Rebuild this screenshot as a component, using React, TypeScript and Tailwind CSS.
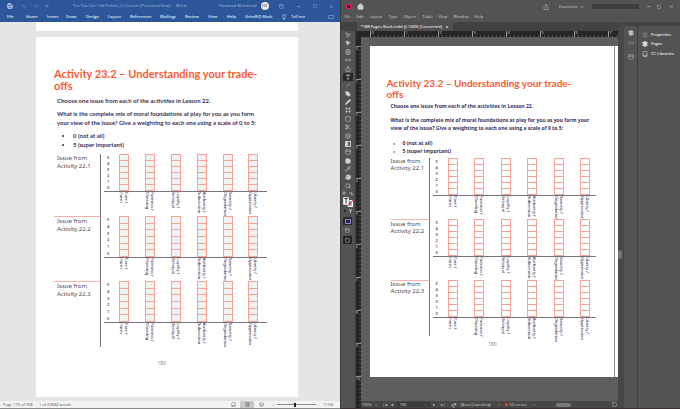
import clsx from "clsx";
import {
  Book,
  ChevronDown,
  Droplet,
  FileText,
  Frame,
  Hand,
  Home,
  Layers,
  Lightbulb,
  Link2,
  Minus,
  MousePointer2,
  MoveHorizontal,
  PanelTop,
  Pencil,
  PenTool,
  Pipette,
  Redo2,
  Save,
  Scissors,
  Search,
  Share,
  SlidersHorizontal,
  Square,
  StickyNote,
  Type,
  Undo2,
  X,
} from "lucide-react";

const wordTabs = [
  { name: "File", width: "w-[19px]" },
  { name: "Home", width: "w-[21px]" },
  { name: "Insert", width: "w-[19px]" },
  { name: "Draw", width: "w-5" },
  { name: "Design", width: "w-[22px]" },
  { name: "Layout", width: "w-[22px]" },
  { name: "References", width: "w-[30px]" },
  { name: "Mailings", width: "w-[25px]" },
  { name: "Review", width: "w-[23px]" },
  { name: "View", width: "w-[19px]" },
  { name: "Help", width: "w-[18px]" },
  { name: "GrindEQ Math", width: "w-[36px]" },
];

const layoutMenus = [
  { name: "File", width: "w-3" },
  { name: "Edit", width: "w-[13px]" },
  { name: "Layout", width: "w-[19px]" },
  { name: "Type", width: "w-[15px]" },
  { name: "Object", width: "w-[19px]" },
  { name: "Table", width: "w-4" },
  { name: "View", width: "w-[15px]" },
  { name: "Window", width: "w-[21px]" },
  { name: "Help", width: "w-3" },
];

const tools = [
  { name: "Selection", icon: MousePointer2 },
  { name: "Direct selection", icon: MousePointer2, solid: true },
  { name: "Page", icon: FileText },
  { name: "Gap", icon: MoveHorizontal },
  { name: "Content collector", icon: Share },
  { name: "Type", icon: Type, active: true },
  { name: "Line", icon: Minus, rotated: true },
  { name: "Pen", icon: PenTool, solid: true },
  { name: "Pencil", icon: Pencil, solid: true },
  { name: "Rectangle frame", icon: Frame },
  { name: "Rectangle", icon: Square },
  { name: "Scissors", icon: Scissors },
  { name: "Free transform", icon: Layers },
  { name: "Gradient swatch", icon: Droplet, gradient: true },
  { name: "Gradient feather", icon: PanelTop },
  { name: "Note", icon: StickyNote, solid: true },
  { name: "Eyedropper", icon: Pipette },
  { name: "Hand", icon: Hand, solid: true },
  { name: "Zoom", icon: Search },
];

const foundations = [
  ["Care /", "Harm"],
  ["Fairness /", "Cheating"],
  ["Loyalty /", "Betrayal"],
  ["Authority /", "Subversion"],
  ["Sanctity /", "Degradation"],
  ["Liberty /", "Oppression"],
];

const scale = [5, 4, 3, 2, 1, 0];

interface ScaleChartProps {
  activity: string;
  rowClass: string;
  plotClass: string;
  labelClass: string;
  plotPadding: string;
  shaded?: boolean;
  first?: boolean;
}

function ScaleChart({
  activity,
  rowClass,
  plotClass,
  labelClass,
  plotPadding,
  shaded,
  first,
}: ScaleChartProps) {
  return (
    <section className={clsx("flex", rowClass)}>
      <h2
        className={clsx(
          "shrink-0 border-r border-r-[#77727c] font-['Noto_Sans'] text-[6px] text-[#514a5e]",
          !first && "border-t border-t-[#f4b5a8]",
          labelClass
        )}
      >
        Issue from
        <br />
        Activity {activity}
      </h2>
      <div className="ml-[3px] min-w-0 flex-1">
        <div className={clsx("flex border-b border-[#77727c]", plotClass)}>
          <div className="flex w-[15px] flex-col justify-between py-px pl-[3px] font-['Noto_Sans'] text-[4px] leading-[5px] font-semibold text-[#55505c]">
            {scale.map((n) => (
              <span key={n}>{n}</span>
            ))}
          </div>
          <div className={clsx("flex flex-1 justify-between", plotPadding)}>
            {foundations.map(([name]) => (
              <div
                key={name}
                className={clsx(
                  "flex w-[10px] flex-col divide-y divide-[#f7a292] border border-[#f7a292]",
                  shaded && "bg-[#f3f2f2]"
                )}
              >
                {scale.map((n) => (
                  <div key={n} className="flex-1 border-[#f7a292]" />
                ))}
              </div>
            ))}
          </div>
        </div>
        <div className={clsx("ml-[15px] flex justify-between", plotPadding)}>
          {foundations.map(([top, bottom]) => (
            <p
              key={top}
              className="h-5 w-[10px] font-['Noto_Sans'] text-[4px] leading-[5px] font-medium whitespace-nowrap text-[#3b3058] [writing-mode:vertical-rl]"
            >
              {top}
              <br />
              {bottom}
            </p>
          ))}
        </div>
      </div>
    </section>
  );
}

function WordWindow() {
  return (
    <div className="flex min-w-0 flex-1 flex-col border-r border-[#3a3a3a] bg-[#e5e5e5]">
      <header className="bg-[#2b579a] text-[#dfe8f5]">
        <div className="flex h-3 items-center pl-[7px] text-[4px]">
          <button aria-label="Save"><Save className="size-[6px]" strokeWidth={3} /></button>
          <button aria-label="Undo" className="ml-2 text-[#6f91c4]"><Undo2 className="size-[5px]" /></button>
          <button aria-label="Redo" className="ml-2 text-[#6f91c4]"><Redo2 className="size-[5px]" /></button>
          <button aria-label="Customize toolbar" className="ml-[6px]"><ChevronDown className="size-1" strokeWidth={4} /></button>
          <h1 className="ml-6 flex-1 whitespace-nowrap text-[#a9bddc]">
            Yes You Can Talk Politics_2_Convert [Protected View] &nbsp;-&nbsp; Word
          </h1>
          <span className="whitespace-nowrap text-[#a9bddc]">Hammad Mehmood</span>
          <span className="ml-1 flex size-2 items-center justify-center rounded-full bg-[#e8e6e3] text-[3px] text-[#555555]">HM</span>
          <button aria-label="Ribbon options" className="ml-[10px] text-[#a9bddc]"><PanelTop className="size-[5px]" /></button>
          <button aria-label="Minimize" className="ml-3 text-[#a9bddc]"><Minus className="size-[5px]" /></button>
          <button aria-label="Restore" className="ml-3 text-[#a9bddc]"><Square className="size-1" /></button>
          <button aria-label="Close" className="mr-[6px] ml-3 text-[#a9bddc]"><X className="size-[5px]" /></button>
        </div>
        <nav className="flex h-[10px] items-center pl-[7px] text-[4px] font-semibold">
          {wordTabs.map((tab) => (
            <button key={tab.name} className={clsx("shrink-0 text-left whitespace-nowrap", tab.width)}>
              {tab.name}
            </button>
          ))}
          <button className="flex flex-1 items-center gap-1 whitespace-nowrap">
            <Lightbulb className="size-[6px]" />
            Tell me
          </button>
          <button aria-label="Comments" className="mr-[6px] h-1 w-[6px] border border-[#5f84bb]" />
        </nav>
      </header>

      <main className="flex min-h-0 flex-1 flex-col gap-[6px] overflow-hidden">
        <div className="mr-[42px] ml-9 h-[9px] shrink-0 bg-white" />
        <article className="mr-[42px] ml-9 flex h-[360px] shrink-0 flex-col bg-white pt-[31px] pl-[18px] text-[#3b3058]">
          <h2 className="font-['Lato'] text-[11px] leading-3 font-bold whitespace-nowrap text-[#fa5a32]">
            Activity 23.2 – Understanding your trade-
            <br />
            offs
          </h2>
          <div className="pt-1 pl-[3px] font-['Lato'] text-[6px] leading-[9px] font-bold whitespace-nowrap">
            <p>Choose one issue from each of the activities in Lesson 22.</p>
            <p className="mt-1">
              What is the complete mix of moral foundations at play for you as you form
              <br />
              your view of the issue? Give a weighting to each one using a scale of 0 to 5:
            </p>
            <ul className="mt-1 list-disc pl-4">
              <li>0 (not at all)</li>
              <li>5 (super important)</li>
            </ul>
          </div>
          <div className="mt-[5px] pr-[31px]">
            <ScaleChart
              activity="22.1"
              first
              shaded
              rowClass="h-[62px]"
              plotClass="h-[38px]"
              labelClass="w-[47px] pl-[3px] leading-2"
              plotPadding="pr-2"
            />
            <ScaleChart
              activity="22.2"
              shaded
              rowClass="h-[65px]"
              plotClass="h-[42px]"
              labelClass="w-[47px] pl-[3px] leading-2"
              plotPadding="pr-2"
            />
            <ScaleChart
              activity="22.3"
              shaded
              rowClass="h-[66px]"
              plotClass="h-[42px]"
              labelClass="w-[47px] pl-[3px] leading-2"
              plotPadding="pr-2"
            />
          </div>
          <footer className="mt-[13px] pr-7 text-center text-[5px] leading-[6px] text-[#77727c]">180</footer>
        </article>
      </main>

      <footer className="flex h-2 shrink-0 items-center border-b border-[#8a8a8a] bg-[#f3f3f3] pr-[6px] pl-[3px] text-[4px] text-[#555555]">
        <span className="w-9 whitespace-nowrap">Page 175 of 298</span>
        <span className="flex-1 whitespace-nowrap">1 of 49684 words</span>
        <button aria-label="Read mode" className="flex w-[14px] justify-center"><Book className="size-[5px]" /></button>
        <button aria-label="Print layout" className="flex h-full w-[14px] items-center justify-center bg-[#c8c8c8]"><FileText className="size-[5px]" /></button>
        <button aria-label="Web layout" className="flex w-[14px] justify-center"><Layers className="size-[5px]" /></button>
        <button aria-label="Zoom out" className="ml-1"><Minus className="size-1" /></button>
        <input
          type="range"
          aria-label="Zoom"
          defaultValue={47}
          className="mx-px h-[5px] w-[39px] appearance-none bg-[linear-gradient(#8a8a8a,#8a8a8a)] bg-[length:100%_1px] bg-center bg-no-repeat [&::-webkit-slider-thumb]:h-1 [&::-webkit-slider-thumb]:w-[2px] [&::-webkit-slider-thumb]:appearance-none [&::-webkit-slider-thumb]:bg-[#222222]"
        />
        <button aria-label="Zoom in" className="mr-1">+</button>
        <span>110%</span>
      </footer>
    </div>
  );
}

function HorizontalRuler() {
  return (
    <div className="flex h-[6px] shrink-0 overflow-hidden bg-[#262626] pl-[9px]">
      {[0, 1, 2, 3, 4, 5, 6, 7].map((n) => (
        <div
          key={n}
          className="w-[34px] shrink-0 border-l border-[#9a9a9a] bg-[repeating-linear-gradient(90deg,#262626_0px_3px,#4a4a4a_3px_4px)] bg-[length:100%_2px] bg-bottom bg-no-repeat pl-px text-[4px] leading-1 text-[#c8c8c8]"
        >
          {n}
        </div>
      ))}
    </div>
  );
}

function VerticalRuler() {
  return (
    <div className="w-[5px] shrink-0 overflow-hidden bg-[#262626] pt-[15px]">
      {[0, 1, 2, 3, 4, 5, 6, 7, 8, 9, 10].map((n) => (
        <div
          key={n}
          className="h-[33px] border-t border-[#8a8a8a] bg-[repeating-linear-gradient(#262626_0px_3px,#4a4a4a_3px_4px)] bg-[length:2px_100%] bg-right bg-no-repeat text-[4px] leading-1 text-[#c8c8c8]"
        >
          {n}
        </div>
      ))}
    </div>
  );
}

function Toolbox() {
  return (
    <aside className="flex w-[15px] shrink-0 flex-col items-center border-r border-[#404040] bg-[#535353] text-[#d4d4d4]">
      <div className="flex h-[159px] shrink-0 flex-col justify-between">
        {tools.map((tool) => (
          <button
            key={tool.name}
            aria-label={tool.name}
            className={clsx(
              "flex h-2 w-[10px] items-center justify-center",
              tool.active && "bg-[#262626] text-white"
            )}
          >
            {tool.gradient ? (
              <span className="size-[6px] border border-[#c9c9c9] bg-linear-to-r from-white to-[#333333]" />
            ) : (
              <tool.icon
                className={clsx("size-[6px]", tool.solid && "fill-current", tool.rotated && "-rotate-45")}
                strokeWidth={2}
              />
            )}
          </button>
        ))}
      </div>
      <svg viewBox="0 0 12 26" className="mt-px h-[26px] w-3 shrink-0" aria-hidden="true">
        <path d="M1 1h2v2H1zM7 2h3v3" fill="none" stroke="#c9c9c9" strokeWidth="0.7" />
        <rect x="5" y="9" width="6" height="7" fill="#fff" />
        <rect x="6.500" y="10.500" width="3" height="4" fill="#777" />
        <path d="M5 16l6-7" stroke="#e53935" strokeWidth="1" />
        <rect x="1" y="6" width="6" height="8" fill="#fff" stroke="#444" strokeWidth="0.400" />
        <path d="M2.500 7.500h3M4 7.500v5" stroke="#222" strokeWidth="1" />
        <path d="M2 19h2v2H2z" fill="#222" />
        <path d="M7 19h3M8.500 19v3" stroke="#d0d0d0" strokeWidth="0.800" />
      </svg>
      <button aria-label="Apply color" className="flex h-2 w-[9px] shrink-0 items-center justify-center bg-[#262626]">
        <span className="h-[5px] w-[6px] border border-[#8c83b8] bg-[#30245c]" />
      </button>
      <button aria-label="View options" className="mt-[3px]"><PanelTop className="size-[5px]" /></button>
      <button aria-label="Screen mode" className="mt-[3px] flex h-2 w-[9px] items-center justify-center bg-[#262626]">
        <Square className="size-[5px]" />
      </button>
    </aside>
  );
}

function LayoutPage() {
  return (
    <article className="ml-[9px] h-[331px] shrink-0 bg-white pr-[3px] text-[#3b3058]">
      <div className="flex h-full flex-col border-r border-[#8a8a8a] pt-8 pl-[17px]">
        <h2 className="font-['Lato'] text-[10px] leading-[11px] font-bold whitespace-nowrap text-[#fa5a32]">
          Activity 23.2 – Understanding your trade-
          <br />
          offs
        </h2>
        <div className="pt-[2px] pl-1 text-[5px] leading-2 font-bold whitespace-nowrap">
          <p>Choose one issue from each of the activities in Lesson 22.</p>
          <p className="mt-[6px]">
            What is the complete mix of moral foundations at play for you as you form your
            <br />
            view of the issue? Give a weighting to each one using a scale of 0 to 5:
          </p>
          <ul className="mt-[7px] list-disc pl-3 marker:text-[#9a95a5]">
            <li>0 (not at all)</li>
            <li>5 (super important)</li>
          </ul>
        </div>
        <div className="mt-[3px] pr-[18px] pl-1">
          <ScaleChart
            activity="22.1"
            first
            rowClass="h-[61px]"
            plotClass="h-[38px]"
            labelClass="w-[39px] leading-[7px]"
            plotPadding="pr-[6px]"
          />
          <ScaleChart
            activity="22.2"
            rowClass="h-[61px]"
            plotClass="h-[38px]"
            labelClass="w-[39px] pt-px leading-[7px]"
            plotPadding="pr-[6px]"
          />
          <ScaleChart
            activity="22.3"
            rowClass="h-[56px]"
            plotClass="h-[38px]"
            labelClass="w-[39px] leading-[7px]"
            plotPadding="pr-[6px]"
          />
        </div>
        <footer className="mt-[5px] pr-4 text-center text-[5px] leading-[6px] text-[#77727c]">180</footer>
      </div>
    </article>
  );
}

function LayoutWindow() {
  return (
    <div className="flex min-w-0 flex-1 flex-col border-b border-[#3a3035] bg-[#535353] text-[4px] text-[#d0d0d0]">
      <header>
        <div className="flex h-[13px] items-center pr-[6px] pl-[5px]">
          <span className="size-[5px] border border-[#e0205f] bg-[#4a0820]" />
          <button aria-label="Home" className="ml-[6px]"><Home className="size-[7px] fill-current" /></button>
          <span className="flex-1" />
          <button aria-label="Share"><Share className="size-[6px]" /></button>
          <button className="ml-[10px] flex w-[33px] items-center gap-[3px]">
            Essentials
            <ChevronDown className="size-1" strokeWidth={4} />
          </button>
          <input aria-label="Search" className="h-[5px] w-[47px] bg-[#3e3e3e]" />
          <button aria-label="Minimize" className="ml-[7px]"><Minus className="size-[5px]" /></button>
          <button aria-label="Restore" className="ml-[6px]"><Square className="size-1" /></button>
          <button aria-label="Close" className="ml-2"><X className="size-[5px]" /></button>
        </div>
        <nav className="flex h-[9px] items-center pb-[2px] pl-1">
          {layoutMenus.map((menu) => (
            <button key={menu.name} className={clsx("shrink-0 text-left", menu.width)}>
              {menu.name}
            </button>
          ))}
        </nav>
      </header>

      <div className="flex min-h-0 flex-1">
        <div className="flex min-w-0 flex-1 flex-col">
          <div className="flex h-[9px] shrink-0 items-center bg-[#424242] pl-4">
            <button className="flex h-full items-center gap-[3px] bg-[#4f4f4f] px-1 font-semibold whitespace-nowrap text-[#e0e0e0]">
              *188 Pages Book.indd @ 100% [Converted]
              <X className="size-1" strokeWidth={4} />
            </button>
          </div>
          <div className="flex min-h-0 flex-1">
            <Toolbox />
            <VerticalRuler />
            <div className="flex min-w-0 flex-1 flex-col bg-[#5e5e5e]">
              <HorizontalRuler />
              <main className="min-h-0 flex-1 overflow-hidden pt-[9px]">
                <LayoutPage />
              </main>
              <footer className="flex h-[7px] shrink-0 items-center bg-[#474747] pl-px">
                <span className="w-3">100%</span>
                <ChevronDown className="size-1" />
                <button aria-label="First page" className="ml-[3px] w-2">|◂</button>
                <button aria-label="Previous page" className="w-[7px]">◂</button>
                <label className="flex w-[34px] items-center bg-[#3a3a3a] pr-px">
                  <input aria-label="Page" defaultValue="180" className="h-[5px] w-7 px-1" />
                  <ChevronDown className="size-1" />
                </label>
                <button aria-label="Next page" className="w-[9px]">▸</button>
                <button aria-label="Last page" className="w-[9px]">▸|</button>
                <Redo2 className="mr-1 ml-[3px] size-[6px]" strokeWidth={3} />
                <span className="w-9 whitespace-nowrap">[Basic] (working)</span>
                <ChevronDown className="size-1" />
                <span className="ml-1 size-[3px] rounded-full bg-[#f03a32]" />
                <span className="ml-[2px] w-[22px] whitespace-nowrap">50 errors</span>
                <ChevronDown className="size-1" />
                <span className="ml-5 h-1 w-[15px] rounded-full bg-[#777777]" />
                <span className="flex-1" />
                <button aria-label="Split view" className="mr-px"><Square className="size-[5px]" /></button>
              </footer>
            </div>
          </div>
        </div>
        <div className="flex w-[6px] shrink-0 items-center bg-[#474747] pt-[79px]">
          <span className="h-[9px] w-1 rounded-full bg-[#777777]" />
        </div>
        <aside className="flex w-[14px] shrink-0 flex-col items-center border-r border-[#3e3e3e] bg-[#535353] text-[#c9c9c9]">
          <div className="mb-1 h-1 w-full bg-[#424242]" />
          <button aria-label="Layers"><Layers className="size-[6px] fill-current" /></button>
          <button aria-label="Links" className="mt-1 text-[#8d8d8d]"><Link2 className="size-[6px]" /></button>
          <button aria-label="Stroke" className="mt-2"><PanelTop className="size-[6px]" /></button>
        </aside>
        <aside className="flex w-[42px] shrink-0 flex-col bg-[#535353] font-semibold text-[#e6e6e6]">
          <div className="mb-1 h-1 bg-[#424242]" />
          <button className="flex h-[9px] items-center gap-[3px] pl-1">
            <SlidersHorizontal className="size-[6px] text-[#9a9a9a]" /> Properties
          </button>
          <button className="flex h-[10px] items-center gap-[3px] pl-1">
            <Layers className="size-[6px] fill-current" /> Pages
          </button>
          <button className="flex h-[9px] items-center gap-[3px] pl-1 whitespace-nowrap">
            <Book className="size-[6px]" /> CC Libraries
          </button>
        </aside>
      </div>
    </div>
  );
}

export default function App() {
  return (
    <div className="flex h-screen overflow-hidden font-['Open_Sans',sans-serif]">
      <WordWindow />
      <LayoutWindow />
    </div>
  );
}
